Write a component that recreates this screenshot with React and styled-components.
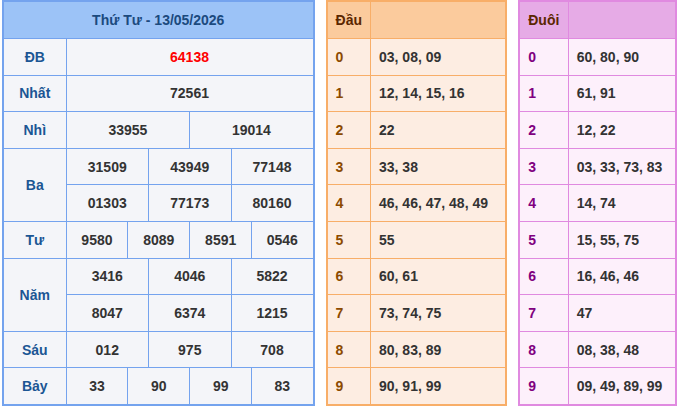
import React from "react";
import styled, { createGlobalStyle } from "styled-components";

const GlobalStyle = createGlobalStyle`
  body {
    margin: 0;
    background: #fff;
    font-family: "Liberation Sans", Arial, sans-serif;
  }
`

const Page = styled.div`
  display: flex;
  align-items: flex-start;
  gap: 11px;
  padding: 0 2px;
`

const Table = styled.table`
  border-collapse: collapse;
  table-layout: fixed;
  width: ${({ $w }) => $w}px;
  border: 2px solid ${({ $line }) => $line};
  background: ${({ $bg }) => $bg};
  font-size: 14px;
  font-weight: bold;
`

const HeadCell = styled.th`
  height: 36px;
  padding: 0 8px;
  background: ${({ $bg }) => $bg};
  border: 1px solid ${({ $line }) => $line};
  color: ${({ $color }) => $color};
  text-align: ${({ $center }) => ($center ? "center" : "left")};
  font-size: 14px;
`

const Label = styled.td`
  height: 35.6px;
  padding: 0;
  border: 1px solid #74a3ee;
  color: #1b5694;
  text-align: center;
`

const Num = styled.td`
  height: 35.6px;
  padding: 0;
  border: 1px solid #74a3ee;
  color: ${({ $red }) => ($red ? "#ff0000" : "#333")};
  text-align: center;
`

const Key = styled.td`
  height: 35.6px;
  padding: 0 8px;
  border: 1px solid ${({ $line }) => $line};
  color: ${({ $color }) => $color};
`

const List = styled.td`
  height: 35.6px;
  padding: 0 8px;
  border: 1px solid ${({ $line }) => $line};
  color: #333;
  white-space: nowrap;
`

const prizes = [
  { name: "ĐB", rows: [["64138"]], red: true },
  { name: "Nhất", rows: [["72561"]] },
  { name: "Nhì", rows: [["33955", "19014"]] },
  { name: "Ba", rows: [["31509", "43949", "77148"], ["01303", "77173", "80160"]] },
  { name: "Tư", rows: [["9580", "8089", "8591", "0546"]] },
  { name: "Năm", rows: [["3416", "4046", "5822"], ["8047", "6374", "1215"]] },
  { name: "Sáu", rows: [["012", "975", "708"]] },
  { name: "Bảy", rows: [["33", "90", "99", "83"]] },
]

const dau = [
  "03, 08, 09", "12, 14, 15, 16", "22", "33, 38", "46, 46, 47, 48, 49",
  "55", "60, 61", "73, 74, 75", "80, 83, 89", "90, 91, 99",
]

const duoi = [
  "60, 80, 90", "61, 91", "12, 22", "03, 33, 73, 83", "14, 74",
  "15, 55, 75", "16, 46, 46", "47", "08, 38, 48", "09, 49, 89, 99",
]

const orange = { line: "#f8ae68", head: "#fbcb9d", bg: "#fdede2", key: "#8c4a00" }
const pink = { line: "#e08ae0", head: "#e6abe6", bg: "#fdf0fb", key: "#800080" }

const ResultTable = () => (
  <Table $w={313} $line="#74a3ee" $bg="#f4f5f9">
    <colgroup>
      <col style={{ width: 63 }} />
      {Array.from({ length: 12 }).map((_, i) => <col key={i} />)}
    </colgroup>
    <thead>
      <tr>
        <HeadCell colSpan={13} $center $bg="#9cc3f7" $line="#74a3ee" $color="#1b4a7e">
          Thứ Tư - 13/05/2026
        </HeadCell>
      </tr>
    </thead>
    <tbody>
      {prizes.map((p) =>
        p.rows.map((row, ri) => (
          <tr key={p.name + ri}>
            {ri === 0 && <Label rowSpan={p.rows.length}>{p.name}</Label>}
            {row.map((n, i) => (
              <Num key={i} colSpan={12 / row.length} $red={p.red}>{n}</Num>
            ))}
          </tr>
        ))
      )}
    </tbody>
  </Table>
)

const LotoTable = ({ title, items, theme, width, keyWidth }) => (
  <Table $w={width} $line={theme.line} $bg={theme.bg}>
    <colgroup>
      <col style={{ width: keyWidth }} />
      <col />
    </colgroup>
    <thead>
      <tr>
        <HeadCell $bg={theme.head} $line={theme.line} $color="#5b2600">{title}</HeadCell>
        <HeadCell $bg={theme.head} $line={theme.line} />
      </tr>
    </thead>
    <tbody>
      {items.map((v, i) => (
        <tr key={i}>
          <Key $line={theme.line} $color={theme.key}>{i}</Key>
          <List $line={theme.line}>{v}</List>
        </tr>
      ))}
    </tbody>
  </Table>
)

export default function App() {
  return (
    <>
      <GlobalStyle />
      <Page>
        <ResultTable />
        <LotoTable title="Đầu" items={dau} theme={orange} width={182} keyWidth={44} />
        <LotoTable title="Đuôi" items={duoi} theme={pink} width={159} keyWidth={49} />
      </Page>
    </>
  )
}
